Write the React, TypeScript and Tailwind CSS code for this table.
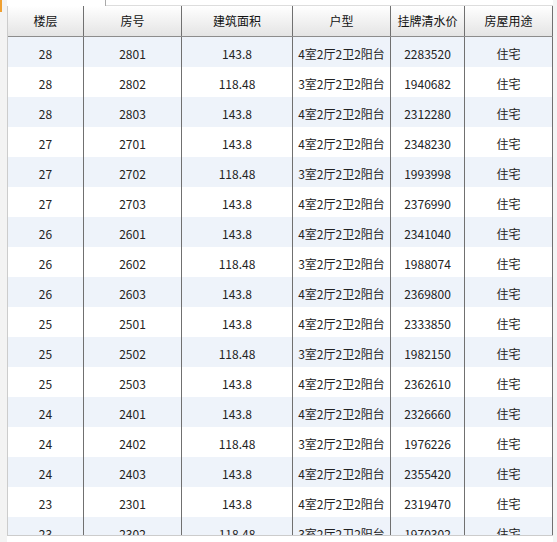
const headers = ["楼层", "房号", "建筑面积", "户型", "挂牌清水价", "房屋用途"];

const rows: string[][] = [
  ["28", "2801", "143.8", "4室2厅2卫2阳台", "2283520", "住宅"],
  ["28", "2802", "118.48", "3室2厅2卫2阳台", "1940682", "住宅"],
  ["28", "2803", "143.8", "4室2厅2卫2阳台", "2312280", "住宅"],
  ["27", "2701", "143.8", "4室2厅2卫2阳台", "2348230", "住宅"],
  ["27", "2702", "118.48", "3室2厅2卫2阳台", "1993998", "住宅"],
  ["27", "2703", "143.8", "4室2厅2卫2阳台", "2376990", "住宅"],
  ["26", "2601", "143.8", "4室2厅2卫2阳台", "2341040", "住宅"],
  ["26", "2602", "118.48", "3室2厅2卫2阳台", "1988074", "住宅"],
  ["26", "2603", "143.8", "4室2厅2卫2阳台", "2369800", "住宅"],
  ["25", "2501", "143.8", "4室2厅2卫2阳台", "2333850", "住宅"],
  ["25", "2502", "118.48", "3室2厅2卫2阳台", "1982150", "住宅"],
  ["25", "2503", "143.8", "4室2厅2卫2阳台", "2362610", "住宅"],
  ["24", "2401", "143.8", "4室2厅2卫2阳台", "2326660", "住宅"],
  ["24", "2402", "118.48", "3室2厅2卫2阳台", "1976226", "住宅"],
  ["24", "2403", "143.8", "4室2厅2卫2阳台", "2355420", "住宅"],
  ["23", "2301", "143.8", "4室2厅2卫2阳台", "2319470", "住宅"],
  ["23", "2302", "118.48", "3室2厅2卫2阳台", "1970302", "住宅"],
];

const cols = "grid grid-cols-[76px_98px_111px_98px_74px_88px]";

export default function App() {
  return (
    <div
      className="flex w-[557px] h-[542px] overflow-hidden bg-white text-[12px] text-[#222]"
      style={{ fontFamily: '"Noto Sans CJK SC", "DejaVu Sans", sans-serif' }}
    >
      {/* left side strip */}
      <div className="w-[7px] flex flex-col bg-[#f3f3f3]">
        <div className="w-[2px] h-[12px] bg-[#f0a030]" />
      </div>

      <div className="flex flex-col w-[546px]">
        {/* tab line */}
        <div className="flex h-[6px] shrink-0">
          <div className="w-[99px] border-r border-[#aaa]" />
          <div className="flex-1 border-b border-[#ddd]" />
        </div>

        <div className="flex flex-col h-[530px] border-l border-b border-[#ccc] overflow-hidden">
          {/* header */}
          <div className={`${cols} h-[31px] shrink-0 border-b border-[#8c8c8c] bg-gradient-to-b from-white to-[#e4e4e4]`}>
            {headers.map((h) => (
              <div key={h} className="flex items-center justify-center border-r border-[#707070] text-[#111]">
                {h}
              </div>
            ))}
          </div>

          {/* body */}
          {rows.map((r, i) => (
            <div
              key={r[1]}
              className={`${cols} h-[30px] shrink-0 ${i % 2 === 0 ? "bg-[#eef3fa]" : "bg-white"}`}
            >
              {r.map((c, j) => (
                <div key={j} className="flex items-center justify-center pt-[4px] border-r border-[#707070]">
                  {c}
                </div>
              ))}
            </div>
          ))}
        </div>
      </div>

      <div className="flex-1 bg-[#f5f5f5]" />
    </div>
  );
}
